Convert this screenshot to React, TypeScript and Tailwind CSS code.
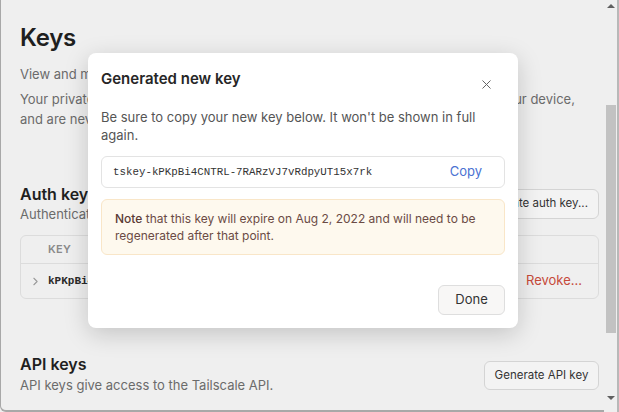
import { X, ChevronRight } from "lucide-react";

const sans = { fontFamily: "Inter, 'Noto Sans', sans-serif" };
const mono = { fontFamily: "'Liberation Mono', monospace" };

const Page = () => {
  return (
    <div className="flex-1 pl-[19px] pr-[5px] pt-[20px] text-[#444]">
      <h1 className="text-[24px] font-semibold leading-[36px] text-[#1f1f1f] tracking-[-0.01em]">Keys</h1>
      <p className="mt-[8px] text-[13px] leading-5 text-[#6b6b6b]">
        View and manage the keys for your network.
      </p>
      <p className="mt-[5px] text-[13px] leading-5 text-[#6b6b6b] whitespace-nowrap">
        Your private keys are stored securely on all of your machines and never leave your device,
        <br />
        and are never shared with anyone.
      </p>

      <div className="mt-[53px] flex items-end justify-between">
        <div>
          <h2 className="text-base font-semibold leading-6 text-[#1f1f1f]">Auth keys</h2>
          <p className="text-[13px] leading-[17px] text-[#6b6b6b]">Authenticate devices without an interactive login.</p>
        </div>
        <button className="h-[30px] rounded-md border border-[#d4d4d4] bg-[#f3f3f3] px-[10px] text-[11.5px] text-[#333] mb-[4px]">
          Generate auth key...
        </button>
      </div>

      <div className="mt-[12px] rounded-md border border-[#dcdcdc]">
        <div className="flex h-[28px] items-center border-b border-[#dcdcdc] pl-[27px] text-[11px] font-semibold tracking-wide text-[#8a8a8a]">
          KEY
        </div>
        <div className="flex h-[34px] items-center pl-[8px] pr-[16px]">
          <ChevronRight size={13} strokeWidth={2} className="text-[#9a9a9a]" />
          <span className="ml-[6px] text-[11px] font-bold text-[#2a2a2a]" style={mono}>
            kPKpBi4CNTRL
          </span>
          <span className="ml-auto text-[13px] text-[#c64a3a]">Revoke...</span>
        </div>
      </div>

      <div className="mt-[53px] flex items-end justify-between">
        <div>
          <h2 className="text-base font-semibold leading-6 text-[#1f1f1f]">API keys</h2>
          <p className="text-[13px] leading-[18px] text-[#6b6b6b]">API keys give access to the Tailscale API.</p>
        </div>
        <button className="h-[29px] w-[115px] rounded-md border border-[#d4d4d4] bg-[#f3f3f3] text-[11.5px] text-[#333] mb-[4px]">
          Generate API key
        </button>
      </div>
    </div>
  );
};

const Scrollbar = () => (
  <div className="flex w-[15px] flex-col items-center border-r-2 border-[#b8b8b8] bg-[#efefef]">
    <div className="mt-[4px] h-0 w-0 border-x-[4px] border-b-[4px] border-x-transparent border-b-[#606060]" />
    <div className="mt-[97px] h-[228px] w-[10px] bg-[#c2c2c2]" />
    <div className="mt-auto mb-[12px] h-0 w-0 border-x-[4px] border-t-[4px] border-x-transparent border-t-[#606060]" />
  </div>
);

const Modal = () => (
  <div className="absolute left-[88px] top-[53px] flex h-[275px] w-[430px] flex-col rounded-lg bg-white px-[13px] pt-[14px] pb-[13px] shadow-[0_6px_24px_rgba(0,0,0,0.18)]">
    <div className="flex items-start justify-between">
      <h3 className="text-[15px] font-semibold leading-6 text-[#262626]">Generated new key</h3>
      <X size={15} strokeWidth={1.6} className="mr-[11px] mt-[10px] text-[#666]" />
    </div>
    <p className="mt-[16px] text-[13px] leading-[18px] text-[#555]">
      Be sure to copy your new key below. It won't be shown in full again.
    </p>
    <div className="mt-[12px] flex h-[32px] items-center rounded-md border border-[#e3e3e3] pl-[11px] pr-[22px]">
      <span className="text-[10.8px] text-[#333]" style={mono}>
        tskey-kPKpBi4CNTRL-7RARzVJ7vRdpyUT15x7rk
      </span>
      <span className="ml-auto text-[13px] text-[#4a72d2]">Copy</span>
    </div>
    <div className="mt-[11px] rounded-md border border-[#f9e6c8] bg-[#fef9ee] px-[13px] py-[10px] text-[12px] leading-[17px] text-[#6b4b45]">
      <span className="font-medium text-[#5a3a34]">Note</span> that this key will expire on Aug 2, 2022 and will need to be
      regenerated after that point.
    </div>
    <div className="mt-auto flex justify-end">
      <button className="h-[30px] w-[67px] rounded-md border border-[#dedede] bg-[#f8f7f6] text-[13px] text-[#333]">
        Done
      </button>
    </div>
  </div>
);

export default function App() {
  return (
    <div className="relative flex h-[412px] w-[619px] overflow-hidden bg-[#efefef]" style={sans}>
      <div className="flex flex-1 overflow-hidden rounded-bl-[6px] border-b-2 border-l border-[#a8a8a8]">
        <Page />
      </div>
      <Scrollbar />
      <Modal />
    </div>
  );
}
